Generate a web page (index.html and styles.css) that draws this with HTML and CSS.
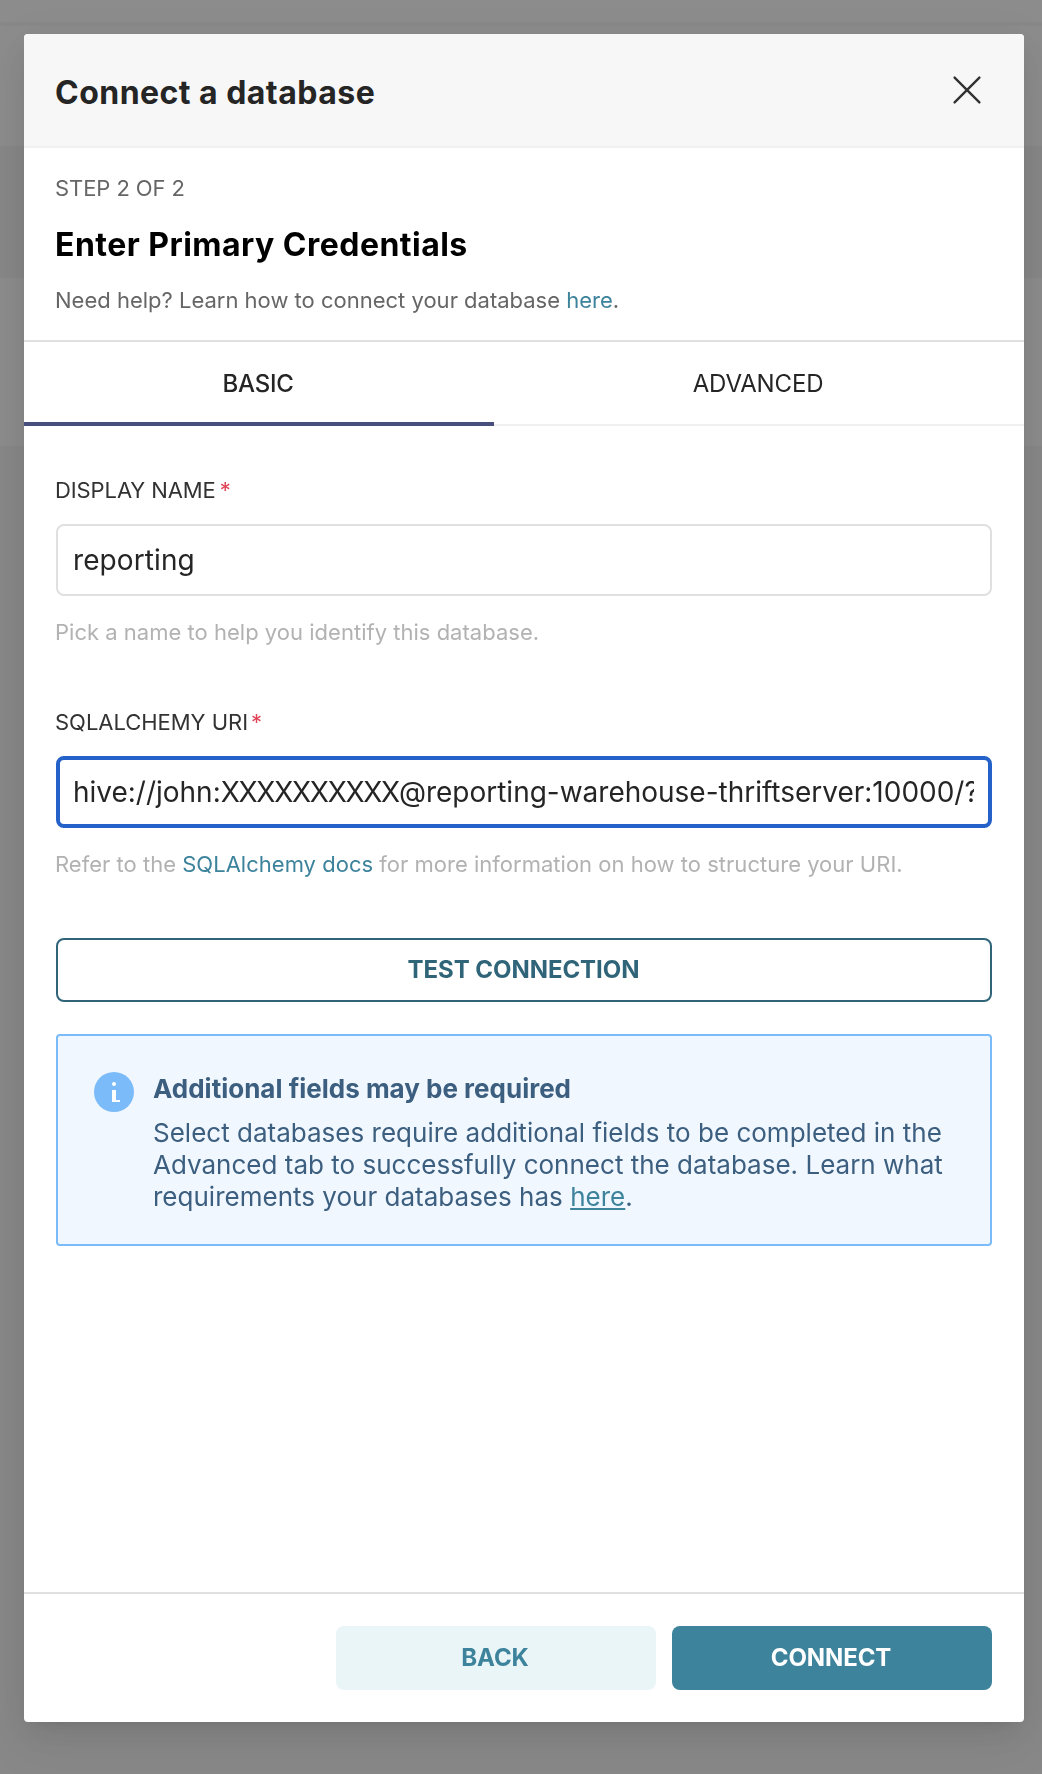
FILE: index.html
```html
<!DOCTYPE html>
<html lang="en">
<head>
<meta charset="utf-8">
<title>Connect a database</title>
<link rel="stylesheet" href="styles.css">
</head>
<body>
<div class="page">
  <div class="band band-nav"></div>
  <div class="band band-subnav"></div>
  <div class="band band-filters"></div>
  <div class="band band-table"></div>
</div>
<div class="mask">
  <section class="modal" role="dialog" aria-label="Connect a database">
    <header class="modal-header">
      <h1 class="modal-title">Connect a database</h1>
      <button class="close" aria-label="Close">
        <svg width="32" height="32" viewBox="0 0 32 32"><path d="M3.6 3.6 28.4 28.4M28.4 3.6 3.6 28.4"/></svg>
      </button>
    </header>
    <div class="intro">
      <p class="step">STEP 2 OF 2</p>
      <h2 class="heading">Enter Primary Credentials</h2>
      <p class="help">Need help? Learn how to connect your database <a href="#">here</a>.</p>
    </div>
    <nav class="tabs">
      <a class="tab tab-active">BASIC</a>
      <a class="tab">ADVANCED</a>
    </nav>
    <div class="form">
      <div class="field">
        <label class="label">DISPLAY NAME<span class="required">*</span></label>
        <div class="input">reporting</div>
        <p class="hint">Pick a name to help you identify this database.</p>
      </div>
      <div class="field">
        <label class="label label-uri">SQLALCHEMY URI<span class="required">*</span></label>
        <div class="input input-focus"><div class="clip">hive://john:<span class="secret">XXXXXXXXXX</span>@reporting-warehouse-thriftserver:10000/?</div></div>
        <p class="hint">Refer to the <a href="#">SQLAlchemy docs</a> for more information on how to structure your URI.</p>
      </div>
      <button class="btn btn-test">TEST CONNECTION</button>
      <div class="alert">
        <svg class="alert-icon" width="40" height="40" viewBox="0 0 40 40"><circle class="disc" cx="20" cy="20" r="20"/><circle cx="20" cy="12" r="2"/><path d="M18 18h4v10h4v2h-8z"/></svg>
        <div class="alert-body">
          <p class="alert-title">Additional fields may be required</p>
          <p class="alert-text">Select databases require additional fields to be completed in the Advanced tab to successfully connect the database. Learn what requirements your databases has <a href="#">here</a>.</p>
        </div>
      </div>
    </div>
    <footer class="modal-footer">
      <button class="btn btn-back">BACK</button>
      <button class="btn btn-connect">CONNECT</button>
    </footer>
  </section>
</div>
</body>
</html>
```
FILE: styles.css
```css
* { box-sizing: border-box; }

body {
  margin: 0;
  font-family: Inter, "Liberation Sans", sans-serif;
  color: #323232;
}

h1, h2, p { margin: 0; }

a { color: #3d839c; text-decoration: none; }

button {
  padding: 0;
  border: 0;
  background: none;
  font: inherit;
  color: inherit;
}

/* Page behind the dialog */
.page {
  position: fixed;
  inset: 0;
  display: flex;
  flex-direction: column;
  background: #f7f7f7;
}
.band-nav { height: 26px; background: #fff; border-bottom: 4px solid #f7f7f7; }
.band-subnav { height: 120px; background: #fff; }
.band-filters { height: 132px; background: #f5f5f5; }
.band-table { height: 168px; background: #fff; }

.mask {
  position: relative;
  height: 1774px;
  padding: 34px 18px 52px 24px;
  background: rgba(0, 0, 0, 0.45);
  overflow: hidden;
}

.modal {
  display: flex;
  flex-direction: column;
  height: 1688px;
  border-radius: 4px;
  background: #fff;
  box-shadow: 0 6px 12px -8px rgba(0, 0, 0, 0.12), 0 12px 32px rgba(0, 0, 0, 0.08), 0 18px 56px 16px rgba(0, 0, 0, 0.05);
}

.modal-header {
  display: flex;
  justify-content: space-between;
  height: 114px;
  padding: 39px 41px 0 31px;
  border-bottom: 2px solid #f0f0f0;
  border-radius: 4px 4px 0 0;
  background: #f7f7f7;
}
.modal-title { font-size: 32px; line-height: 40px; font-weight: 700; letter-spacing: 0.47px; color: #252525; }
.close { width: 32px; height: 32px; margin-top: 1px; }
.close svg { display: block; fill: none; stroke: #323232; stroke-width: 2.4; stroke-linecap: round; }

.intro {
  height: 194px;
  padding: 24px 31px 0;
  border-bottom: 2px solid #e0e0e0;
}
.step { font-size: 22px; line-height: 32px; letter-spacing: -0.08px; color: #666; }
.heading { margin-top: 21px; font-size: 32px; line-height: 40px; font-weight: 700; letter-spacing: 0.47px; color: #000; }
.help { margin-top: 19px; font-size: 22px; line-height: 32px; color: #666; }

.tabs { display: flex; height: 84px; border-bottom: 2px solid #f0f0f0; }
.tab {
  flex: 1;
  height: 84px;
  padding: 26px 2px 0 0;
  font-size: 24px;
  line-height: 32px;
  letter-spacing: -0.15px;
  text-align: center;
  color: #252525;
}
.tab-active {
  flex: 0 0 470px;
  border-bottom: 4px solid #484f7d;
  font-weight: 500;
  letter-spacing: -0.25px;
}

.form { flex: 1; padding: 48px 32px 0; }
.field { height: 232px; }
.label { display: flex; gap: 4px; margin-left: -1px; font-size: 22px; line-height: 32px; letter-spacing: -0.1px; }
.label-uri { gap: 3px; letter-spacing: -0.03px; }
.required { color: #e04355; }
.input {
  display: flex;
  align-items: center;
  height: 72px;
  margin-top: 18px;
  padding: 0 15px;
  border: 2px solid #e0e0e0;
  border-radius: 8px;
  font-size: 28px;
  line-height: 36px;
  white-space: nowrap;
  letter-spacing: 0.1px;
  color: #252525;
}
.input-focus { padding: 0 14px 0 13px; border: 4px solid #2461c9; letter-spacing: -0.01px; }
.clip { overflow: hidden; }
.secret { letter-spacing: -1.28px; }
.hint { margin: 20px 0 0 -1px; font-size: 22px; line-height: 32px; letter-spacing: 0.015px; color: #b2b2b2; }

.btn {
  height: 64px;
  border-radius: 8px;
  font-size: 24px;
  line-height: 32px;
  font-weight: 700;
  letter-spacing: -0.1px;
  text-align: center;
}
.btn-test { display: block; width: 100%; padding-right: 1px; border: 2px solid #2f6479; letter-spacing: -0.06px; color: #2f6479; }

.alert {
  display: flex;
  gap: 20px;
  height: 212px;
  margin-top: 32px;
  padding: 36px 30px 0 36px;
  border: 2px solid #7cbbf9;
  border-radius: 4px;
  background: #f0f7fe;
  color: #3c5e7f;
}
.alert-icon { flex: none; fill: #fff; }
.disc { fill: #7cbbf9; }
.alert-body { margin: -1px 0 0 -1px; }
.alert-title { font-size: 26px; line-height: 36px; font-weight: 700; }
.alert-text { margin-top: 10px; font-size: 26px; line-height: 32px; letter-spacing: 0.01px; }
.alert-text a { text-decoration: underline; }

.modal-footer {
  display: flex;
  justify-content: flex-end;
  gap: 16px;
  height: 130px;
  padding: 32px;
  border-top: 2px solid #e0e0e0;
}
.btn-back, .btn-connect { width: 320px; padding-right: 2px; }
.btn-back { background: #eaf5f8; color: #3d839c; }
.btn-connect { background: #3d839c; color: #fff; }
```
